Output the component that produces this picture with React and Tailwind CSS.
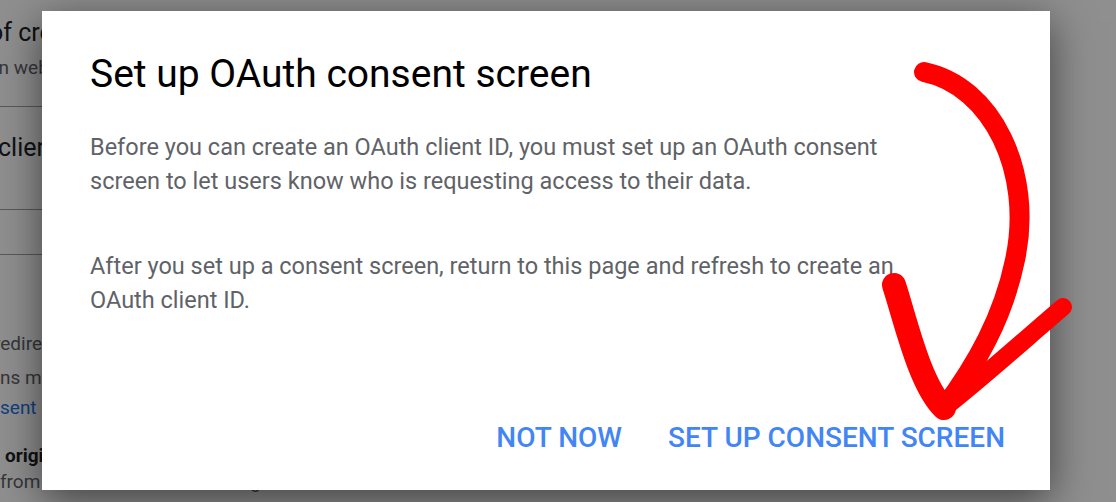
import React from 'react'

const font = { fontFamily: 'Roboto, "Liberation Sans", sans-serif' }

function RedArrow() {
  return (
    <svg className="pointer-events-none absolute left-0 top-0" width="1116" height="502" viewBox="0 0 1116 502">
      <g fill="none" stroke="#ff0000" strokeLinecap="round" strokeLinejoin="round">
        <path d="M924 72 C 992 86, 1034 172, 1015 260 C 1003 318, 976 365, 944 408" strokeWidth="20" />
        <path d="M894 285 C 906 322, 920 385, 944 408" strokeWidth="24" />
        <path d="M944 408 C 980 380, 1030 335, 1063 307" strokeWidth="18" />
      </g>
    </svg>
  )
}

function Backdrop() {
  return (
    <div className="flex h-full flex-col text-[#202124]" style={font}>
      <div className="-ml-[11px] pt-[16px] text-[25px] leading-[34px]">of credentials</div>
      <div className="-ml-[6px] text-[19px] leading-[36px] text-[#5f6368]">in web application</div>
      <div className="mt-[20px] h-px w-[60px] bg-[#9aa0a6]" />
      <div className="-ml-[2px] mt-[26px] text-[25px] leading-[30px]">client ID</div>
      <div className="mt-[46px] h-px w-[60px] bg-[#9aa0a6]" />
      <div className="mt-[44px] h-px w-[60px] bg-[#9aa0a6]" />
      <div className="-ml-[6px] mt-[72px] text-[19px] leading-[34px] text-[#5f6368]">redirect</div>
      <div className="text-[19px] leading-[34px] text-[#5f6368]">ns must be</div>
      <div className="text-[19px] leading-[26px] text-[#1a73e8]">sent screen</div>
      <div className="ml-[5px] mt-[24px] text-[19px] font-bold leading-[22px]">origins</div>
      <div className="mt-[2px] text-[19px] leading-[26px] text-[#5f6368]">from a browser. This is the origin URI of the client</div>
    </div>
  )
}

export default function App() {
  return (
    <div className="relative h-[502px] w-[1116px] overflow-hidden bg-white">
      <Backdrop />
      <div className="absolute inset-0 bg-black/[0.44]" />
      <div
        className="absolute left-[42px] top-[11px] flex h-[479px] w-[1008px] flex-col bg-white px-[48px] shadow-[0_10px_40px_rgba(0,0,0,0.55)]"
        style={font}
      >
        <h2 className="mt-[40px] text-[39px] leading-[46px] text-black">Set up OAuth consent screen</h2>
        <p className="mt-[33px] max-w-[830px] text-[23.5px] leading-[34px] text-[#5f6368]">
          Before you can create an OAuth client ID, you must set up an OAuth consent screen to let users know who is
          requesting access to their data.
        </p>
        <p className="mt-[51px] max-w-[830px] text-[23.5px] leading-[34px] text-[#5f6368]">
          After you set up a consent screen, return to this page and refresh to create an OAuth client ID.
        </p>
        <div className="mt-auto mb-[36px] flex justify-end gap-[46px] text-[28px] font-medium leading-[32px] text-[#4285f4]">
          <button>NOT NOW</button>
          <button className="-mr-[3px]">SET UP CONSENT SCREEN</button>
        </div>
      </div>
      <RedArrow />
    </div>
  )
}
